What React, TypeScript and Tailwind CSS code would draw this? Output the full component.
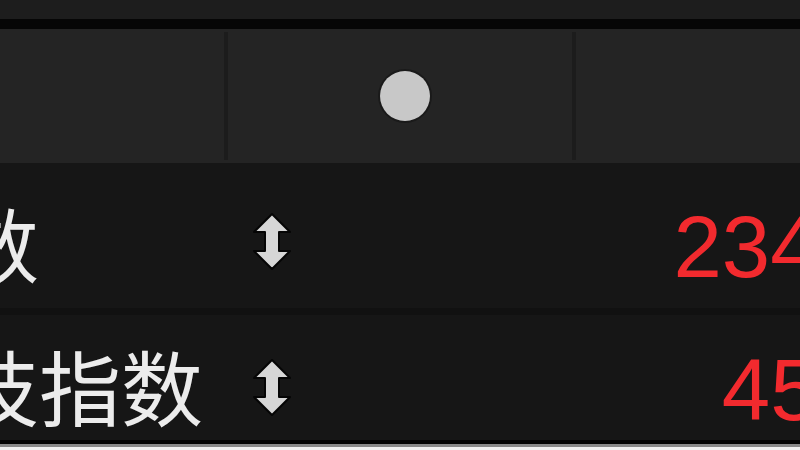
import React from "react";

function SortIcon() {
  return (
    <svg width="40" height="57" viewBox="-1 -1 40 57" className="block">
      <polygon
        points="19,0 37,18 26,18 26,37 37,37 19,55 1,37 12,37 12,18 1,18"
        fill="#d6d6d6"
        stroke="#050505"
        strokeWidth="2"
        strokeLinejoin="round"
      />
    </svg>
  );
}

const cjk = { fontFamily: '"Noto Sans CJK SC", "Noto Sans", sans-serif' };

export default function App() {
  return (
    <div
      className="w-[800px] h-[450px] overflow-hidden bg-[#161616] flex flex-col"
      style={{ fontFamily: '"Liberation Sans", Arial, sans-serif' }}
    >
      <div className="h-[19px] bg-[#1d1d1d] shrink-0" />
      <div className="h-[10px] bg-[#060606] shrink-0" />
      <div className="h-[134px] bg-[#242424] flex shrink-0">
        <div className="w-[224px]" />
        <div className="w-[4px] bg-[#1c1c1c] my-[3px]" />
        <div className="w-[344px] flex items-center justify-center pl-[10px]">
          <div className="w-[50px] h-[50px] rounded-full bg-[#c8c8c8] ring-2 ring-[#1a1a1a]" />
        </div>
        <div className="w-[4px] bg-[#1c1c1c] my-[3px]" />
        <div className="flex-1" />
      </div>

      <div className="h-[145px] flex items-start shrink-0 bg-[#161616]">
        <div
          className="w-[377px] ml-[-125px] mt-[38px] text-[82px] leading-none text-[#ececec] whitespace-nowrap"
          style={cjk}
        >
          指数
        </div>
        <div className="mt-[50px]">
          <SortIcon />
        </div>
        <div className="flex-1 flex justify-end mr-[-67px] mt-[40px]">
          <span className="text-[87px] leading-none text-[#f22a2e]">2345</span>
        </div>
      </div>

      <div className="h-[7px] bg-[#111111] shrink-0" />

      <div className="h-[125px] flex items-start shrink-0 bg-[#161616]">
        <div
          className="w-[377px] ml-[-125px] mt-[29px] text-[82px] leading-none text-[#ececec] whitespace-nowrap"
          style={cjk}
        >
          科技指数
        </div>
        <div className="mt-[44px]">
          <SortIcon />
        </div>
        <div className="flex-1 flex justify-end mr-[-67px] mt-[31px]">
          <span className="text-[87px] leading-none text-[#f22a2e]">456</span>
        </div>
      </div>

      <div className="h-[4px] bg-[#050505] shrink-0" />
      <div className="h-[3px] bg-[#8a8a8a] shrink-0" />
      <div className="flex-1 bg-[#f2f2f2]" />
    </div>
  );
}
